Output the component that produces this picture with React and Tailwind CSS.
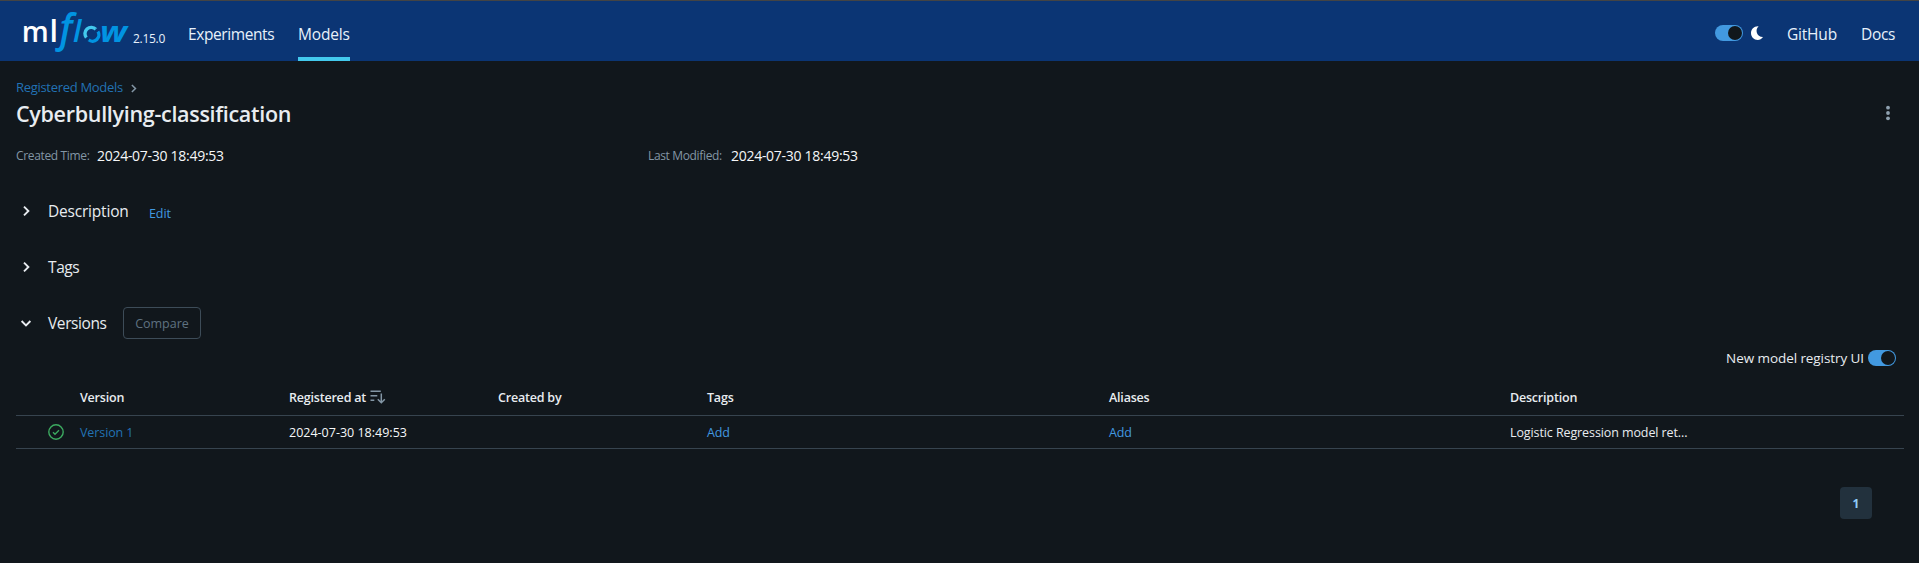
import React from "react";

const Switch = () => (
  <span className="flex h-4 w-7 items-center justify-end rounded-full bg-[#4299e0] p-px">
    <span className="size-3.5 rounded-full bg-[#11171c]" />
  </span>
);

const Logo = () => (
  <svg width="106" height="50" viewBox="0 -6 106 50" className="block overflow-visible" fontFamily="'Open Sans', sans-serif">
    <text x="-1.3" y="33" fontSize="28.5" fontWeight="600" fill="#fff" textLength="27" lengthAdjust="spacingAndGlyphs">m</text>
    <text x="26.6" y="33" fontSize="30.5" fontWeight="600" fill="#fff">l</text>
    <text x="36.5" y="33" fontSize="40" fontWeight="600" fontStyle="italic" fill="#0194e2" textLength="13" lengthAdjust="spacingAndGlyphs">f</text>
    <text x="50" y="33" fontSize="30.5" fontWeight="600" fontStyle="italic" fill="#0194e2">l</text>
    <g fill="none" strokeWidth="3.4">
      <path d="M63.6 29 A6.3 6.3 0 0 1 73 20.4" stroke="#43c9ed" />
      <path d="M74.8 22.4 A6.3 6.3 0 0 1 65.6 30.8" stroke="#0194e2" />
    </g>
    <path d="M61 30.6 65.4 27 65.6 31.4Z" fill="#0b3574" />
    <path d="M77 20.4 72.6 19.6 73.2 23.8Z" fill="#0b3574" />
    <text x="77" y="33" fontSize="28.5" fontWeight="700" fontStyle="italic" fill="#0194e2" textLength="27" lengthAdjust="spacingAndGlyphs">w</text>
  </svg>
);

const Chevron = ({ className = "", tone = "#e8ecf0" }) => (
  <svg width="16" height="16" viewBox="0 0 16 16" fill="none" stroke={tone} strokeWidth="1.9" className={className}>
    <path d="M6 3.6 10.4 8 6 12.4" />
  </svg>
);

const SortIcon = () => (
  <svg width="16" height="16" viewBox="0 0 16 16" fill="none" stroke="#8396a5" strokeWidth="1.5" className="mt-[3px]">
    <path d="M.5 2.2h10.3M.5 6.7h6.8M.5 11.2h3.8M11.3 4.5v9M7.8 10.2l3.5 3.5 3.5-3.5" />
  </svg>
);

const cols = "grid grid-cols-[64px_209px_209px_209px_402px_401px_1fr]";

export default function App() {
  return (
    <div className="h-[563px] w-full overflow-hidden bg-[#11171c] font-['Open_Sans','Noto_Sans',sans-serif] text-[13px] text-[#e8ecf0]">
      <header className="flex h-[61px] justify-between border-t border-[#444] bg-[#0b3574] pl-[23px] pr-[23px] text-[#e7f1fb]">
        <div className="flex">
          <div className="pt-0.5"><Logo /></div>
          <span className="ml-1 mt-7 h-5 w-[55px] text-[12px] leading-5 tracking-[-0.3px]">2.15.0</span>
          <nav className="flex text-[15.5px] leading-6">
            <a className="w-[86px] pt-[21px] tracking-[-0.4px]">Experiments</a>
            <a className="ml-6 w-[52px] border-b-4 border-[#43c9ed] pt-[21px] tracking-[-0.15px]">Models</a>
          </nav>
        </div>
        <div className="flex text-[15.5px] leading-6">
          <div className="flex pt-6"><Switch /></div>
          <svg width="14" height="16" viewBox="0 0 14 16" className="ml-[7px] mt-6" fill="#fff">
            <path d="M8.6 1.2C4.8 4.6 6.4 11.6 13 12.1 11.6 14 9.8 15 7.8 15 4 15 1 12 1 8 1 4.2 4.2.8 8.6 1.2Z" />
          </svg>
          <a className="ml-[23px] w-[50px] pt-[21px] tracking-[-0.2px]">GitHub</a>
          <a className="ml-6 w-[35px] pt-[21px] tracking-[-0.3px]">Docs</a>
        </div>
      </header>

      <main className="pl-4 pr-[15px] pt-4">
        <div className="flex h-5 items-center leading-5 text-[#2272b4]">
          <a className="tracking-[-0.3px]">Registered Models</a>
          <Chevron className="ml-1 mt-0.5 size-[13px]" tone="#8396a5" />
        </div>
        <div className="flex h-8 items-center justify-between pr-2">
          <h1 className="pt-0.5 text-[21.5px] font-semibold leading-8 tracking-[-0.3px]">Cyberbullying-classification</h1>
          <svg width="16" height="16" viewBox="0 0 16 16" fill="#8fa1b0">
            <circle cx="8" cy="2.7" r="1.9" /><circle cx="8" cy="8" r="1.9" /><circle cx="8" cy="13.3" r="1.9" />
          </svg>
        </div>
        <div className="mt-[15px] flex h-6 items-center leading-6">
          <div className="flex w-[633px] gap-2">
            <span className="w-[73px] whitespace-nowrap text-[12px] tracking-[-0.35px] text-[#8396a5]">Created Time:</span>
            <span className="text-[14px] tracking-[-0.28px] text-[#f6f7f9]">2024-07-30 18:49:53</span>
          </div>
          <div className="-ml-px flex gap-2">
            <span className="w-[75px] whitespace-nowrap text-[12px] tracking-[-0.35px] text-[#8396a5]">Last Modified:</span>
            <span className="text-[14px] tracking-[-0.28px] text-[#f6f7f9]">2024-07-30 18:49:53</span>
          </div>
        </div>

        <section className="mt-[31px] flex h-6 items-center pl-0.5">
          <Chevron />
          <h2 className="ml-[14px] w-[101px] text-[15.5px] leading-6 tracking-[-0.2px]">Description</h2>
          <a className="mt-1.5 text-[12.5px] tracking-[-0.1px] text-[#4299e0]">Edit</a>
        </section>
        <section className="mt-8 flex h-6 items-center pl-0.5">
          <Chevron />
          <h2 className="ml-[14px] text-[15.5px] leading-6 tracking-[-0.4px]">Tags</h2>
        </section>
        <section className="mt-7 flex h-8 items-center pl-0.5">
          <Chevron className="rotate-90" />
          <h2 className="ml-[14px] w-[75px] text-[15.5px] leading-6 tracking-[-0.4px]">Versions</h2>
          <button className="h-8 w-[78px] rounded border border-[#3d4c58] pt-0.5 text-[12.5px] text-[#5f7281]">Compare</button>
        </section>

        <div className="mt-[7px] flex h-6 items-center justify-end gap-1 pr-2 text-[13.5px] leading-6 tracking-[-0.08px]">
          <span>New model registry UI</span>
          <Switch />
        </div>

        <div className="mt-[11px]">
          <div className={`${cols} h-[35px] border-b border-[#37444f] pt-[5px] text-[12.5px] font-semibold leading-6 tracking-[-0.2px]`}>
            <span />
            <span>Version</span>
            <span className="flex gap-1">Registered at <SortIcon /></span>
            <span>Created by</span>
            <span>Tags</span>
            <span>Aliases</span>
            <span>Description</span>
          </div>
          <div className={`${cols} h-[33px] border-b border-[#37444f] text-[12.5px] leading-[34px] tracking-[-0.1px]`}>
            <svg width="16" height="16" viewBox="0 0 16 16" className="ml-8 mt-2" fill="none" stroke="#3caa60" strokeWidth="1.4">
              <circle cx="8" cy="8" r="7.2" /><path d="m5 8.2 2 2 4-4" />
            </svg>
            <a className="text-[#2272b4]">Version 1</a>
            <span className="tracking-normal text-[#f6f7f9]">2024-07-30 18:49:53</span>
            <span />
            <a className="text-[#4299e0]">Add</a>
            <a className="text-[#4299e0]">Add</a>
            <span>Logistic Regression model ret...</span>
          </div>
        </div>
        <div className="mt-[38px] flex justify-end pr-8">
          <span className="flex size-8 items-center justify-center rounded bg-[#22313d] pt-0.5 text-[12px] font-bold text-[#90cdf9]">1</span>
        </div>
      </main>
    </div>
  );
}
